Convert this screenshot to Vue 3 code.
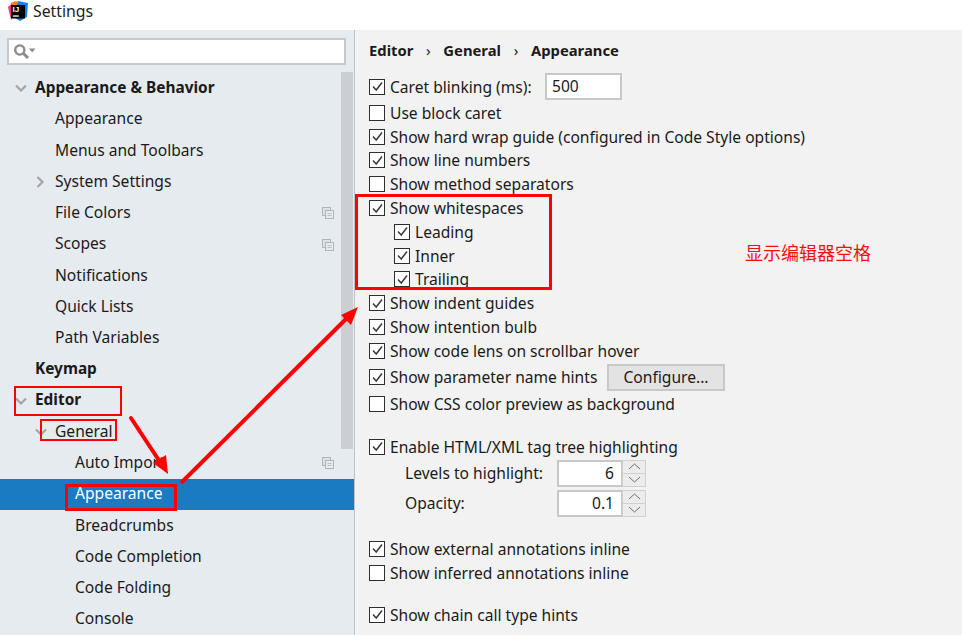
<template>
  <div class="dialog">
    <header class="titlebar">
      <svg class="logo" width="20" height="20" viewBox="0 0 20 20">
        <path d="M0 6 L7 0 L9 10 L3 19 Z" fill="#f0386b" />
        <path d="M10 0 L20 2 L19 16 L12 20 L4 15 Z" fill="#1c7fe8" />
        <path d="M2 2 L10 0 L8 6 Z" fill="#fc801d" />
        <rect x="3" y="4" width="14" height="13.5" fill="#000" />
        <text x="4.6" y="11" class="logo-text">IJ</text>
        <rect x="4.8" y="14.4" width="6" height="1.3" fill="#fff" />
      </svg>
      <span class="title">Settings</span>
    </header>

    <div class="body">
      <aside class="sidebar">
        <div class="search-wrap">
          <div class="search">
            <svg width="24" height="18" viewBox="0 0 24 18">
              <circle cx="5.8" cy="7" r="4.6" fill="none" stroke="#8c8c8c" stroke-width="2.4" />
              <path d="M9.5 10.5 L14 15" stroke="#8c8c8c" stroke-width="3" />
              <path d="M15 5.5 H21.5 L18.2 9.5 Z" fill="#8c8c8c" />
            </svg>
          </div>
        </div>

        <ul class="tree">
          <li
            v-for="item in tree"
            :key="item.label + item.level"
            class="node"
            :class="[item.level, { selected: item.selected }]"
          >
            <svg v-if="item.arrow === 'down'" class="chev" :class="item.level" width="12" height="8" viewBox="0 0 12 8">
              <path d="M1 1.5 L6 6.5 L11 1.5" fill="none" stroke="#a3a5a7" stroke-width="2.2" />
            </svg>
            <svg v-if="item.arrow === 'right'" class="chev side" width="8" height="12" viewBox="0 0 8 12">
              <path d="M1.5 1 L6.5 6 L1.5 11" fill="none" stroke="#a3a5a7" stroke-width="2.2" />
            </svg>
            <span>{{ item.label }}</span>
            <svg v-if="item.copy" class="copy" width="12" height="12" viewBox="0 0 12 12">
              <rect x="0.5" y="0.5" width="8" height="8" fill="#dde2e6" stroke="#aeb6bc" />
              <rect x="3.5" y="3.5" width="8" height="8" fill="#e6ebf0" stroke="#aeb6bc" />
              <path d="M5.5 6.5 H9.5 M5.5 8.5 H9.5" stroke="#b8c0c6" />
            </svg>
          </li>
        </ul>
        <div class="scrollbar"></div>
      </aside>

      <main class="panel">
        <nav class="crumbs">
          <span>Editor</span><i>›</i><span>General</span><i>›</i><span>Appearance</span>
        </nav>

        <div class="row tall">
          <span class="box on"><svg width="13" height="13" viewBox="0 0 13 13"><path d="M2 6.5 L5.2 10 L11 2.5" /></svg></span>
          <label>Caret blinking (ms):</label>
          <div class="input caret-input">500</div>
        </div>

        <div
          v-for="opt in topOptions"
          :key="opt.label"
          class="row"
          :class="{ sub: opt.sub }"
        >
          <span class="box" :class="{ on: opt.on }"><svg v-if="opt.on" width="13" height="13" viewBox="0 0 13 13"><path d="M2 6.5 L5.2 10 L11 2.5" /></svg></span>
          <label>{{ opt.label }}</label>
        </div>

        <div class="row tall first-after">
          <span class="box on"><svg width="13" height="13" viewBox="0 0 13 13"><path d="M2 6.5 L5.2 10 L11 2.5" /></svg></span>
          <label>Show parameter name hints</label>
          <button class="btn">Configure...</button>
        </div>

        <div class="row first-after">
          <span class="box"></span>
          <label>Show CSS color preview as background</label>
        </div>

        <div class="row group-a">
          <span class="box on"><svg width="13" height="13" viewBox="0 0 13 13"><path d="M2 6.5 L5.2 10 L11 2.5" /></svg></span>
          <label>Enable HTML/XML tag tree highlighting</label>
        </div>

        <div v-for="(sp, i) in spinners" :key="sp.label" class="row tall spin-row" :class="{ second: i === 1 }">
          <label class="spin-label">{{ sp.label }}</label>
          <div class="input spin-input">{{ sp.value }}</div>
          <div class="stepper">
            <span><svg width="13" height="7" viewBox="0 0 13 7"><path d="M1 6 L6.5 1 L12 6" /></svg></span>
            <span><svg width="13" height="7" viewBox="0 0 13 7"><path d="M1 1 L6.5 6 L12 1" /></svg></span>
          </div>
        </div>

        <div class="row group-b">
          <span class="box on"><svg width="13" height="13" viewBox="0 0 13 13"><path d="M2 6.5 L5.2 10 L11 2.5" /></svg></span>
          <label>Show external annotations inline</label>
        </div>
        <div class="row">
          <span class="box"></span>
          <label>Show inferred annotations inline</label>
        </div>
        <div class="row group-c">
          <span class="box on"><svg width="13" height="13" viewBox="0 0 13 13"><path d="M2 6.5 L5.2 10 L11 2.5" /></svg></span>
          <label>Show chain call type hints</label>
        </div>
      </main>
    </div>

    <!-- screenshot annotations -->
    <div class="mark mark-editor"></div>
    <div class="mark mark-general"></div>
    <div class="mark mark-selected"></div>
    <div class="mark mark-spaces"></div>
    <div class="note">显示编辑器空格</div>
    <svg class="arrows" width="962" height="635" viewBox="0 0 962 635">
      <path d="M131 418 L162 465" stroke="#ff0000" stroke-width="4" stroke-linecap="round" />
      <path d="M168 474 L153 463 L166 455 Z" fill="#ff0000" />
      <path d="M181 483 L349 316" stroke="#ff0000" stroke-width="4" />
      <path d="M358 307 L351 325 L341 315 Z" fill="#ff0000" />
    </svg>
  </div>
</template>

<script setup>
const tree = [
  { label: 'Appearance & Behavior', level: 'top', arrow: 'down' },
  { label: 'Appearance', level: 'l1' },
  { label: 'Menus and Toolbars', level: 'l1' },
  { label: 'System Settings', level: 'l1', arrow: 'right' },
  { label: 'File Colors', level: 'l1', copy: true },
  { label: 'Scopes', level: 'l1', copy: true },
  { label: 'Notifications', level: 'l1' },
  { label: 'Quick Lists', level: 'l1' },
  { label: 'Path Variables', level: 'l1' },
  { label: 'Keymap', level: 'top' },
  { label: 'Editor', level: 'top', arrow: 'down' },
  { label: 'General', level: 'l1', arrow: 'down' },
  { label: 'Auto Import', level: 'l2', copy: true },
  { label: 'Appearance', level: 'l2', selected: true },
  { label: 'Breadcrumbs', level: 'l2' },
  { label: 'Code Completion', level: 'l2' },
  { label: 'Code Folding', level: 'l2' },
  { label: 'Console', level: 'l2' },
];

const topOptions = [
  { label: 'Use block caret', on: false },
  { label: 'Show hard wrap guide (configured in Code Style options)', on: true },
  { label: 'Show line numbers', on: true },
  { label: 'Show method separators', on: false },
  { label: 'Show whitespaces', on: true },
  { label: 'Leading', on: true, sub: true },
  { label: 'Inner', on: true, sub: true },
  { label: 'Trailing', on: true, sub: true },
  { label: 'Show indent guides', on: true },
  { label: 'Show intention bulb', on: true },
  { label: 'Show code lens on scrollbar hover', on: true },
];

const spinners = [
  { label: 'Levels to highlight:', value: '6' },
  { label: 'Opacity:', value: '0.1' },
];
</script>

<style>
html, body { margin: 0; background: #f2f2f2; overflow: hidden; }
</style>

<style scoped>
.dialog {
  position: relative;
  width: 962px;
  height: 635px;
  overflow: hidden;
  display: flex;
  flex-direction: column;
  font-family: "Noto Sans", "Noto Sans CJK SC", sans-serif;
  font-size: 15.6px;
  color: #1a1a1a;
}

.titlebar {
  height: 30px;
  background: #fff;
  display: flex;
  align-items: center;
  padding-left: 8px;
  gap: 5px;
  flex-shrink: 0;
}
.logo-text { font-family: "Liberation Sans", sans-serif; font-size: 8px; font-weight: 700; fill: #fff; }
.title { font-size: 15.8px; margin-top: -8px; color: #222; }
.logo { margin-top: -8px; }

.body { flex: 1; display: flex; min-height: 0; }

.sidebar {
  position: relative;
  width: 354px;
  background: #e6ebf0;
  border-right: 1px solid #c2c2c2;
  flex-shrink: 0;
}
.search-wrap { height: 42.4px; padding: 8px 8px 0 7px; box-sizing: border-box; }
.search {
  height: 27px;
  background: #fff;
  border: 2px solid #c6c9cc;
  box-sizing: border-box;
  display: flex;
  align-items: center;
  padding-left: 5px;
}
.scrollbar {
  position: absolute;
  left: 341px;
  top: 42px;
  width: 12px;
  height: 377px;
  background: #cbcfd4;
}

.tree { list-style: none; margin: 0; padding: 0; }
.node {
  position: relative;
  height: 31.25px;
  padding-bottom: 2px;
  box-sizing: border-box;
  display: flex;
  align-items: center;
  white-space: nowrap;
}
.node.top { padding-left: 35px; font-weight: 700; font-size: 15.4px; }
.node.l1 { padding-left: 55px; }
.node.l2 { padding-left: 75px; }
.node.selected { background: #1a7ac2; color: #fff; }

.chev { position: absolute; top: 12px; }
.chev.top { left: 15px; }
.chev.l1 { left: 35px; }
.chev.side { left: 36px; top: 10px; }
.copy { position: absolute; left: 322px; top: 10px; }

.panel { flex: 1; background: #f2f2f2; padding-top: 0; min-width: 0; }
.crumbs {
  height: 39px;
  padding-left: 14px;
  margin-bottom: 4px;
  display: flex;
  align-items: center;
  font-weight: 700;
  font-size: 14.8px;
  white-space: nowrap;
}
.crumbs i { font-style: normal; font-weight: 400; width: 30px; text-align: center; font-size: 15px; }

.row {
  height: 23.8px;
  padding-left: 14px;
  display: flex;
  align-items: center;
  white-space: nowrap;
}
.row.tall { height: 27px; margin-bottom: 1px; }
.row.sub { padding-left: 39px; }
.row.first-after { margin-top: 1px; margin-bottom: 0; }
.row.group-a { margin-top: 19.2px; }
.row.group-b { margin-top: 20.5px; }
.row.group-c { margin-top: 18px; }
.row.spin-row { margin-top: 1px; margin-bottom: 0; }
.row.spin-row.second { margin-top: 3px; }

.box {
  width: 16px;
  height: 16px;
  border: 1px solid #2e2e2e;
  background: #fff;
  box-sizing: border-box;
  margin-right: 5px;
  display: flex;
  align-items: center;
  justify-content: center;
  flex-shrink: 0;
}
.box svg path { fill: none; stroke: #3a3a3a; stroke-width: 1.5; }

.input {
  background: #fff;
  border: 2px solid #c8c8c8;
  box-sizing: border-box;
  height: 27px;
  line-height: 22px;
}
.caret-input { width: 77px; margin-left: auto; margin-right: 340px; padding-left: 5px; }
.spin-label { width: 188px; padding-left: 36px; box-sizing: border-box; }
.spin-input { width: 65px; text-align: right; padding-right: 7px; border-right-width: 1px; }

.btn {
  width: 118px;
  height: 27px;
  margin-left: auto;
  margin-right: 237px;
  background: #e3e3e3;
  border: 2px solid #c8c8c8;
  font: inherit;
  color: inherit;
  padding: 0;
}

.stepper {
  width: 24px;
  height: 27px;
  display: flex;
  flex-direction: column;
  background: #d0d0d0;
  gap: 1px;
  padding: 1px;
  box-sizing: border-box;
}
.stepper span {
  flex: 1;
  background: #ececec;
  display: flex;
  align-items: center;
  justify-content: center;
}
.stepper path { fill: none; stroke: #6e6e6e; stroke-width: 1; }

.mark {
  position: absolute;
  border: 2px solid #ff0000;
  box-sizing: border-box;
}
.mark-editor { left: 14px; top: 386px; width: 108px; height: 30px; }
.mark-general { left: 40px; top: 419px; width: 77px; height: 22px; }
.mark-selected { left: 65px; top: 484px; width: 112px; height: 27px; border-width: 3px; }
.mark-spaces { left: 355px; top: 194px; width: 197px; height: 96px; border-width: 3px; }

.note {
  position: absolute;
  left: 745px;
  top: 239px;
  font-size: 18px;
  line-height: 26px;
  color: #f01010;
  font-family: "Noto Sans CJK SC", sans-serif;
}

.arrows { position: absolute; left: 0; top: 0; pointer-events: none; }
</style>
